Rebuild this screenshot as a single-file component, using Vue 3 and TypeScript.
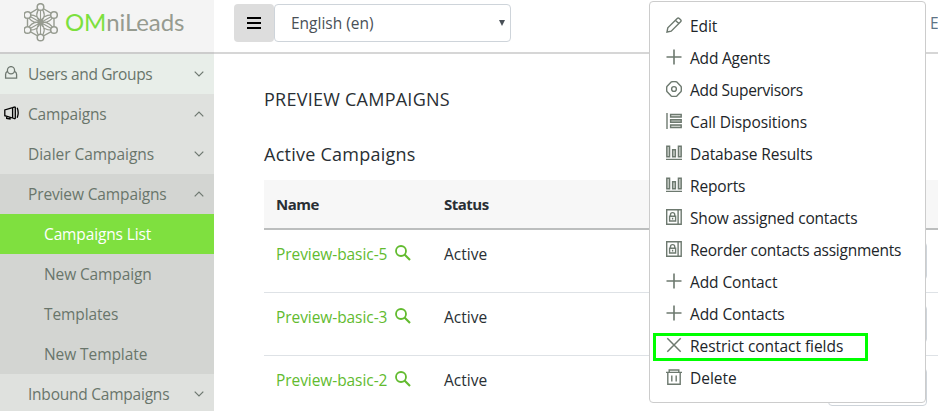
<script setup lang="ts">
interface NavItem {
  label: string
  level: string
  arrow?: 'down' | 'up'
  icon?: 'user' | 'horn'
  ls: number
}

interface MenuItem {
  label: string
  icon: string
  ls: number
  marked?: boolean
}

const nav: NavItem[] = [
  { label: 'Users and Groups', level: 'top', arrow: 'down', icon: 'user', ls: -0.36 },
  { label: 'Campaigns', level: 'open', arrow: 'up', icon: 'horn', ls: -0.17 },
  { label: 'Dialer Campaigns', level: 'open', arrow: 'down', ls: -0.04 },
  { label: 'Preview Campaigns', level: 'deep', arrow: 'up', ls: -0.13 },
  { label: 'Campaigns List', level: 'leaf active', ls: -0.13 },
  { label: 'New Campaign', level: 'leaf', ls: -0.12 },
  { label: 'Templates', level: 'leaf', ls: -0.11 },
  { label: 'New Template', level: 'leaf', ls: -0.08 },
  { label: 'Inbound Campaigns', level: 'open', arrow: 'down', ls: -0.23 },
]

const menu: MenuItem[] = [
  { label: 'Edit', icon: 'edit', ls: -0.1 },
  { label: 'Add Agents', icon: 'plus', ls: -0.2 },
  { label: 'Add Supervisors', icon: 'eye', ls: -0.3 },
  { label: 'Call Dispositions', icon: 'list', ls: -0.09 },
  { label: 'Database Results', icon: 'bars', ls: -0.1 },
  { label: 'Reports', icon: 'bars', ls: -0.15 },
  { label: 'Show assigned contacts', icon: 'book', ls: -0.19 },
  { label: 'Reorder contacts assignments', icon: 'book', ls: -0.24 },
  { label: 'Add Contact', icon: 'plus', ls: -0.1 },
  { label: 'Add Contacts', icon: 'plus', ls: -0.1 },
  { label: 'Restrict contact fields', icon: 'cross', ls: -0.05, marked: true },
  { label: 'Delete', icon: 'trash', ls: 0 },
]

const campaigns: string[] = ['Preview-basic-5', 'Preview-basic-3', 'Preview-basic-2']

const outer: number[][] = [[16.5, 7], [30, 15], [30, 30], [16.5, 37.5], [3.5, 30], [3.5, 15]]
</script>

<template>
  <div class="page">
    <aside class="sidebar">
      <div class="brand">
        <svg class="emblem" width="34" height="42" viewBox="0 3 34 42" fill="none" stroke="#969b90">
          <path stroke-width="1.4" d="M16.5 7 30 15V30L16.5 37.5 3.5 30V15Z" />
          <path stroke-width="1.1" d="M16.5 7V37.5M3.5 15 30 30M30 15 3.5 30M16.5 7Q9 15 16.5 22.3Q24 15 16.5 7M16.5 37.5Q9 30 16.5 22.3Q24 30 16.5 37.5M3.5 15Q14 14 16.5 22.3Q7 24 3.5 15M30 15Q19 14 16.5 22.3Q26 24 30 15M3.5 30Q7 21 16.5 22.3Q14 31 3.5 30M30 30Q26 21 16.5 22.3Q19 31 30 30" />
          <circle cx="16.5" cy="22.3" r="2.4" stroke-width="1.2" />
          <circle v-for="(p, i) in outer" :key="i" :cx="p[0]" :cy="p[1]" r="3.3" fill="#f4f4f4" stroke-width="1.5" />
        </svg>
        <span class="wordmark"><b>OM</b>niLeads</span>
      </div>
      <nav>
        <div v-for="item in nav" :key="item.label" class="nav-row" :class="item.level">
          <svg v-if="item.icon === 'user'" class="nav-icon" width="16" height="16" viewBox="0 0 16 16" fill="none" stroke="#6e7870" stroke-width="1.3">
            <circle cx="7" cy="4.2" r="3.6" />
            <path d="M3.4 5.4C2 6 1.6 7 1.6 8.5V12.2H12.6V8.5C12.6 7 12 6 10.6 5.4" />
          </svg>
          <svg v-if="item.icon === 'horn'" class="nav-icon" width="16" height="16" viewBox="0 0 16 16" fill="none" stroke="#000" stroke-width="1.3">
            <path d="M8.6 1.6V12L.8 9.7V3.9ZM11.3.8V12.8M8.6 1.6 11.3.8M8.6 12 11.3 12.8M2.7 10.2V12.4L6 13V11.2M13.2 1.8C14.3 4.5 14.3 8.9 13.2 11.8" />
          </svg>
          <span class="nav-text" :style="{ letterSpacing: item.ls + 'px' }">{{ item.label }}</span>
          <svg v-if="item.arrow" class="chevron" :class="item.arrow" width="10" height="6" viewBox="0 0 10 6" fill="none" stroke="#6e7870" stroke-width="1.2"><path d="M.7.6 5 4.9 9.3.6" /></svg>
        </div>
      </nav>
    </aside>

    <main class="main">
      <header class="topbar">
        <button class="burger" aria-label="Menu"><i></i><i></i><i></i></button>
        <div class="select"><span>English (en)</span><svg width="6" height="6" viewBox="0 0 6 6"><path d="M0 0H6L3 6Z" fill="#495057" /></svg></div>
        <span class="edge">E</span>
      </header>
      <section class="content">
        <h1>PREVIEW CAMPAIGNS</h1>
        <h2>Active Campaigns</h2>
        <div class="table">
          <div class="tr head"><span>Name</span><span>Status</span></div>
          <div v-for="name in campaigns" :key="name" class="tr">
            <a><span class="name">{{ name }}</span><svg width="16" height="16" viewBox="0 0 16 16" fill="none" stroke="#62bb2f"><circle cx="6" cy="6" r="5" stroke-width="1.8" /><path d="M9.5 9.5 15 15" stroke-width="2.1" /></svg></a>
            <span class="status">Active</span>
            <span class="action"></span>
          </div>
        </div>
      </section>
    </main>

    <div class="menu">
      <div v-for="item in menu" :key="item.label" class="menu-item">
        <svg width="16" height="16" viewBox="0 0 16 16" fill="none" stroke="#6d796f" stroke-width="1.4">
          <path v-if="item.icon === 'edit'" d="M1 15 1.8 10.8 11.2 1.4Q12.2.4 13.3 1.4L14.6 2.7Q15.6 3.8 14.6 4.8L5.2 14.2ZM9.4 3.3 12.7 6.6" />
          <path v-else-if="item.icon === 'plus'" stroke-width="1.6" d="M8 .5V15.5M.5 8H15.5" />
          <g v-else-if="item.icon === 'eye'"><path d="M5.2.9Q8 .3 10.8.9L15.1 5.4Q15.6 8 15.1 10.6L10.8 15.1Q8 15.7 5.2 15.1L.9 10.6Q.4 8 .9 5.4Z" stroke-linejoin="round" /><circle cx="8" cy="8" r="2.4" /></g>
          <path v-else-if="item.icon === 'list'" fill="#c9cec9" d="M1 0V16M4.6 1.4H15.2V4H4.6ZM4.6 6.7H15.2V9.3H4.6ZM4.6 12H15.2V14.6H4.6Z" />
          <path v-else-if="item.icon === 'bars'" fill="#c9cec9" d="M.8 1.2H3.6V11.7H.8ZM6.6 4.7H9.4V11.7H6.6ZM12.4 1.2H15.2V11.7H12.4ZM0 14.4H16" />
          <g v-else-if="item.icon === 'book'"><path d="M.7.7H15.2V15.2H.7ZM12.1.7V15.2" /><path d="M3.6 7.3H9.6V12H3.6ZM4.5 7.3V5.5C4.5 3 8.7 3 8.7 5.5V7.3M6.6 8.8V10.6" /></g>
          <path v-else-if="item.icon === 'cross'" stroke-width="1.5" d="M1.3 1.3 14.7 14.7M14.7 1.3 1.3 14.7" />
          <path v-else d="M0 3.4H16M3.2 3.4V1H12.8V3.4M1.8 3.4V15.2H14.2V3.4M5.8 6.4V12.4M10.2 6.4V12.4" />
        </svg>
        <span :style="{ letterSpacing: item.ls + 'px' }">{{ item.label }}</span>
        <i v-if="item.marked" class="mark"></i>
      </div>
    </div>
  </div>
</template>

<style>
body { margin: 0; overflow: hidden; }
</style>

<style scoped>
* { box-sizing: border-box; }
.page { position: relative; display: flex; width: 938px; height: 411px; overflow: hidden; background: #fff; color: #292f34; font: 15.5px/24px "Open Sans", "Noto Sans", sans-serif; white-space: nowrap; }
.sidebar { flex: none; width: 214px; background: #dfe1de; }
.brand { display: flex; height: 54px; padding: 3px 0 0 24px; background: #f4f4f4; border-bottom: 2px solid #ccc; }
.emblem { flex: none; }
.wordmark { margin: 4px 0 0 7px; font: 24px/30px Lato, sans-serif; letter-spacing: -0.1px; color: #969b90; }
.wordmark b { font-weight: 400; color: #7ce03e; }
.nav-row { position: relative; display: flex; align-items: center; height: 40px; padding-left: 28px; color: #69756b; background: #dfe1de; }
.nav-row.top { background: #e8eee9; }
.nav-row.deep, .nav-row.leaf { background: #d3d5d2; }
.nav-row.leaf { padding-left: 44px; }
.nav-row.active { background: #7fe03f; color: #fff; }
.nav-icon { position: absolute; left: 4px; top: 12px; }
.chevron { margin: 0 10px 1px auto; }
.chevron.up { transform: rotate(180deg); }
.main { flex: 1; min-width: 0; }
.topbar { display: flex; height: 54px; padding: 4px 0 0 20px; border-bottom: 2px solid #d6d6d6; }
.burger { flex: none; display: flex; flex-direction: column; justify-content: center; align-items: center; gap: 3px; width: 40px; height: 38px; padding: 0; border: 0; border-radius: 4px; background: #ddd; }
.burger i { width: 14px; height: 2px; background: #000; }
.select { flex: none; display: flex; align-items: center; justify-content: space-between; width: 237px; height: 38px; padding: 0 5px 0 16px; border: 1px solid #ced4da; border-radius: 4px; color: #495057; }
.edge { margin: 7px 0 0 419px; color: #5e7486; }
.content { padding: 31px 0 0 50px; }
h1, h2 { margin: 0; font-weight: 500; font-size: 18px; line-height: 28px; letter-spacing: 0.25px; }
h2 { margin: 27px 0 12px; }
.tr { display: flex; width: 674px; height: 63px; padding: 12px 11px 0 12px; border-top: 1px solid #dee2e6; }
.tr.head { height: 50px; padding-top: 12px; border-top: 0; border-bottom: 2px solid #bcbebe; background: #f7f7f7; font-weight: 700; font-size: 15px; letter-spacing: -0.5px; }
.tr.head + .tr { height: 62px; padding-top: 12px; border-top: 0; }
.tr > :first-child { width: 168px; flex: none; }
a { color: #62bb2f; }
.name { letter-spacing: -0.07px; }
a svg { margin-left: 8px; vertical-align: -1px; }
.action { width: 99px; height: 38px; margin-left: auto; border: 1px solid #ced4da; border-radius: 4px; }
.menu { position: absolute; left: 649px; top: 1px; width: 277px; height: 402px; padding: 8px 0 0 16px; border: 1px solid #ccc; border-radius: 4px; background: #fff; color: #212529; }
.menu-item { position: relative; display: flex; height: 32px; padding-top: 4px; }
.menu-item svg { flex: none; margin: 3px 8px 0 0; }
.mark { position: absolute; left: -13px; top: 3px; width: 215px; height: 28px; border: 3px solid #0f0; }
</style>
